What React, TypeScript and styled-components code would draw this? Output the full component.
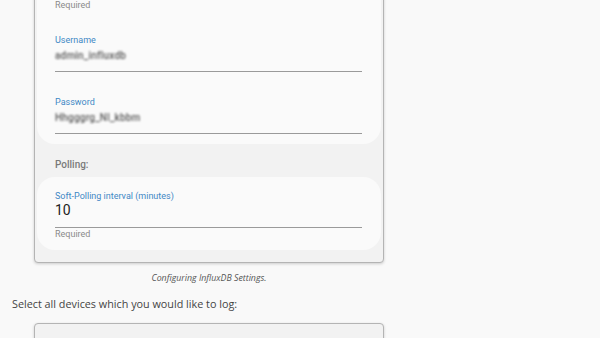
import styled, { createGlobalStyle } from 'styled-components';

const GlobalStyle = createGlobalStyle`
    html, body {
        margin: 0;
        padding: 0;
        background: #f9f9f9;
        overflow: hidden;
    }
`;

const Page = styled.div`
    width: 600px;
    height: 338px;
    overflow: hidden;
    padding-left: 12px;
    box-sizing: border-box;
    font-family: 'Open Sans', 'Liberation Sans', sans-serif;
`;

const Figure = styled.figure<{ $offset: number }>`
    margin: ${({ $offset }) => $offset}px 0 0 22px;
    width: 350px;
`;

const Card = styled.div`
    box-sizing: border-box;
    width: 350px;
    background: #f2f2f2;
    border: 1px solid #b4b4b4;
    border-radius: 4px;
    box-shadow: 0 1px 3px rgba(0, 0, 0, 0.18);
    padding: 2px 2px 12px;
    font-family: Roboto, 'Liberation Sans', sans-serif;
`;

const EmptyCard = styled(Card)`
    height: 120px;
`;

const Section = styled.div<{ $top: number }>`
    background: #fafafa;
    border-radius: 18px;
    padding: ${({ $top }) => $top}px 19px 10px 18px;
    display: flex;
    flex-direction: column;
`;

const Heading = styled.div`
    margin: 14px 0 5px 18px;
    font-size: 10px;
    line-height: 14px;
    font-weight: 500;
    color: #7a7a7a;
`;

const Field = styled.div<{ $gap: number }>`
    margin-top: ${({ $gap }) => $gap}px;
    display: flex;
    flex-direction: column;
`;

const Label = styled.div`
    font-size: 9px;
    line-height: 12px;
    color: #3f88c5;
`;

const Input = styled.div`
    height: 17px;
    padding-bottom: 8px;
    border-bottom: 1px solid #9a9a9a;
    font-size: 14px;
    line-height: 17px;
    color: #222;
    white-space: nowrap;
`;

const Secret = styled.span`
    display: inline-block;
    color: #5a5a5a;
    font-size: 10px;
    font-weight: 500;
    letter-spacing: 0.2px;
    filter: blur(1.3px);
`;

const Helper = styled.div`
    margin-top: 1px;
    font-size: 9px;
    line-height: 11px;
    color: #8a8a8a;
`;

const Caption = styled.figcaption`
    margin-top: 9px;
    text-align: center;
    font-style: italic;
    font-size: 8.8px;
    line-height: 12px;
    color: #555;
`;

const Text = styled.p`
    margin: 12px 0 11px;
    font-size: 10.8px;
    line-height: 16px;
    color: #444;
`;

const App = () => {
    return (
        <>
            <GlobalStyle />
            <Page>
                <Figure $offset={-42}>
                    <Card>
                        <Section $top={12}>
                            <Field $gap={0}>
                                <Input />
                                <Helper>Required</Helper>
                            </Field>
                            <Field $gap={23}>
                                <Label>Username</Label>
                                <Input>
                                    <Secret>admin_influxdb</Secret>
                                </Input>
                            </Field>
                            <Field $gap={24}>
                                <Label>Password</Label>
                                <Input>
                                    <Secret>Hhgggrg_Nl_kbbm</Secret>
                                </Input>
                            </Field>
                        </Section>
                        <Heading>Polling:</Heading>
                        <Section $top={13}>
                            <Field $gap={0}>
                                <Label>Soft-Polling interval (minutes)</Label>
                                <Input>10</Input>
                                <Helper>Required</Helper>
                            </Field>
                        </Section>
                    </Card>
                    <Caption>Configuring InfluxDB Settings.</Caption>
                </Figure>
                <Text>Select all devices which you would like to log:</Text>
                <Figure $offset={0}>
                    <EmptyCard />
                </Figure>
            </Page>
        </>
    );
};

export default App;
